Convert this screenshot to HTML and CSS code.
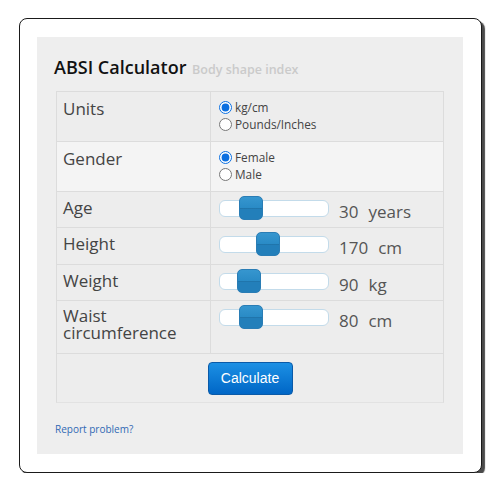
FILE: index.html
```html
<!DOCTYPE html>
<html>
<head>
<meta charset="utf-8">
<link rel="stylesheet" href="styles.css">
</head>
<body>
<div class="frame">
  <div class="panel">
    <h1 class="title">ABSI Calculator <span class="sub">Body shape index</span></h1>
    <div class="table">
      <div class="row row-units">
        <div class="label">Units</div>
        <div class="field radios">
          <label class="opt"><input type="radio" name="u" checked>kg/cm</label>
          <label class="opt"><input type="radio" name="u">Pounds/Inches</label>
        </div>
      </div>
      <div class="row row-gender alt">
        <div class="label">Gender</div>
        <div class="field radios">
          <label class="opt"><input type="radio" name="g" checked>Female</label>
          <label class="opt"><input type="radio" name="g">Male</label>
        </div>
      </div>
      <div class="row row-slider">
        <div class="label">Age</div>
        <div class="field slider-field">
          <div class="track"><span class="thumb" style="left:19px"></span></div>
          <span class="value">30<span class="unit">years</span></span>
        </div>
      </div>
      <div class="row row-slider row-height">
        <div class="label">Height</div>
        <div class="field slider-field">
          <div class="track"><span class="thumb" style="left:36px"></span></div>
          <span class="value">170<span class="unit">cm</span></span>
        </div>
      </div>
      <div class="row row-slider">
        <div class="label">Weight</div>
        <div class="field slider-field">
          <div class="track"><span class="thumb" style="left:17px"></span></div>
          <span class="value">90<span class="unit">kg</span></span>
        </div>
      </div>
      <div class="row row-slider row-waist">
        <div class="label">Waist circumference</div>
        <div class="field slider-field">
          <div class="track"><span class="thumb" style="left:19px"></span></div>
          <span class="value">80<span class="unit">cm</span></span>
        </div>
      </div>
      <div class="row row-button">
        <button class="calc" type="button">Calculate</button>
      </div>
    </div>
    <a class="report" href="#">Report problem?</a>
  </div>
</div>
</body>
</html>
```
FILE: styles.css
```css
* { box-sizing: border-box; }
html, body { margin: 0; padding: 0; background: #fff; }
body { font-family: "Open Sans", "DejaVu Sans", sans-serif; }

.frame {
  width: 463px;
  height: 455px;
  margin: 18px 0 0 19px;
  border: 1px solid #1a1a1a;
  border-radius: 8px;
  box-shadow: 3px 3px 1px #4a4a4a;
  padding: 18px 18px 0 17px;
  background: #fff;
}

.panel {
  height: 417px;
  background: #eeeeee;
  padding: 18px 19px 0 19px;
}

.title {
  margin: 0 0 12px -2px;
  font-size: 18px;
  font-weight: 600;
  line-height: 24px;
  height: 24px;
  color: #111;
}
.sub {
  font-size: 12.5px;
  line-height: 14px;
  font-weight: 600;
  color: #cacaca;
  margin-left: 1px;
}

.table {
  border: 1px solid #dcdcdc;
  border-bottom-color: #e2e2e2;
}
.row {
  display: grid;
  grid-template-columns: 154px 1fr;
  border-top: 1px solid #dcdcdc;
  background: #ededed;
}
.row:first-child { border-top: 0; }
.row.alt { background: #f4f4f4; }
.row-units { height: 49px; }
.row-gender { height: 50px; }
.row-slider { height: 36px; }
.row-height { height: 37px; }
.row-waist { height: 53px; }
.row-button {
  height: 49px;
  display: flex;
  align-items: center;
  justify-content: center;
}

.label {
  padding: 8px 0 0 6px;
  font-size: 17px;
  line-height: 17px;
  color: #444;
  border-right: 1px solid #dcdcdc;
}
.row-slider .label { padding-top: 7px; }
.row-waist .label { padding-top: 6px; }

.field { padding: 8px 0 0 8px; }
.radios { display: flex; flex-direction: column; padding-top: 7px; }
.opt {
  display: flex;
  align-items: center;
  font-size: 11.8px;
  line-height: 17px;
  color: #444;
}
.opt input {
  width: 13px;
  height: 13px;
  margin: 0 3px 0 0;
  accent-color: #0b6fe0;
}

.slider-field {
  display: flex;
  align-items: flex-start;
  padding-top: 8px;
}
.track {
  position: relative;
  width: 110px;
  height: 17px;
  background: #fff;
  border: 1px solid #c3dbea;
  border-radius: 6px;
  flex: none;
}
.thumb {
  position: absolute;
  top: -5px;
  width: 24px;
  height: 24px;
  border-radius: 5px;
  border: 1px solid #2a7db5;
  background: linear-gradient(#3696cf 0%, #2a8bc6 48%, #1e6fa3 50%, #237fba 56%, #237fba 100%);
}
.value {
  margin: 2px 0 0 10px;
  font-size: 17px;
  line-height: 20px;
  color: #555;
}
.unit { margin-left: 10px; }

.calc {
  width: 85px;
  height: 33px;
  border: 1px solid #0a5aa8;
  border-radius: 4px;
  background: linear-gradient(#1c90e4, #0066c6);
  color: #fff;
  font-family: "Liberation Sans", Arial, sans-serif;
  font-size: 14px;
  padding: 0;
}

.report {
  display: block;
  margin: 19px 0 0 -1px;
  font-size: 10px;
  line-height: 14px;
  color: #3169b4;
  text-decoration: none;
}
```
